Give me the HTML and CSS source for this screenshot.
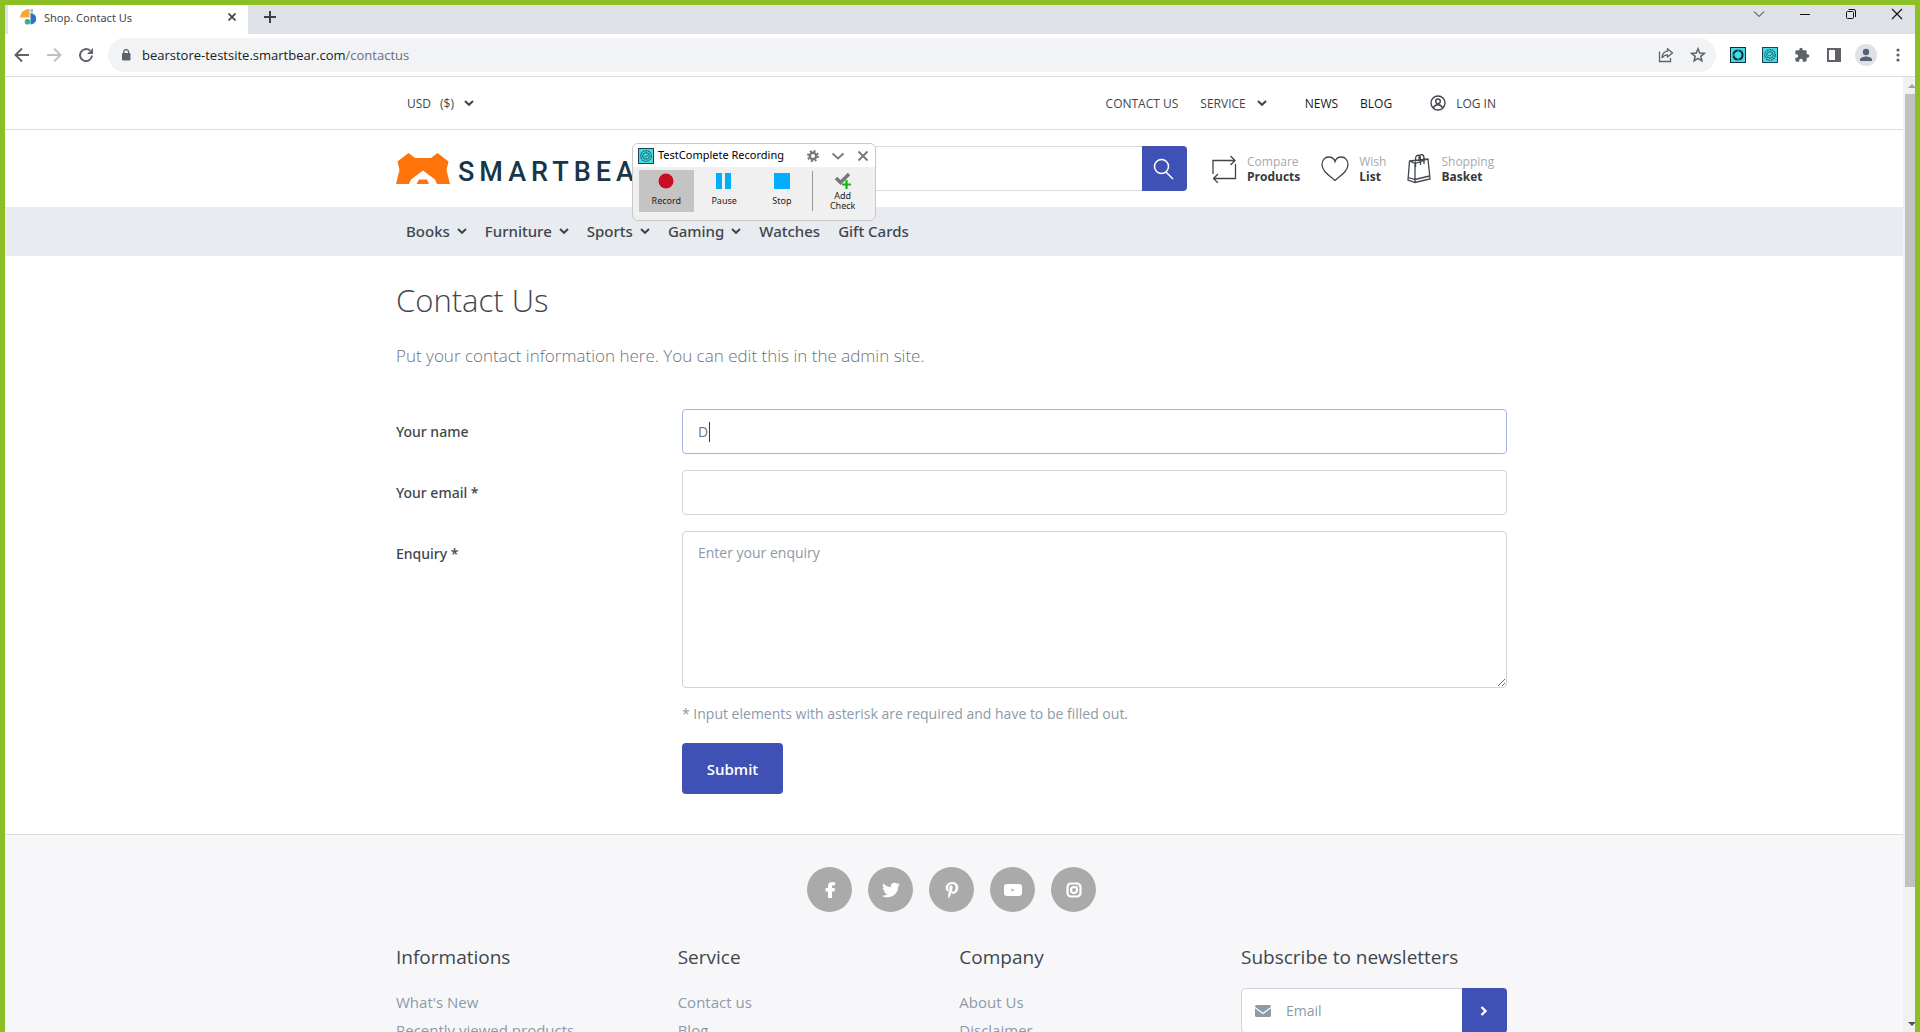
FILE: index.html
```html
<!DOCTYPE html>
<html lang="en">
<head>
<meta charset="utf-8">
<title>Shop. Contact Us</title>
<link rel="stylesheet" href="styles.css">
</head>
<body>
<svg class="defs" aria-hidden="true">
  <symbol id="chev" viewBox="0 0 10 8"><path d="M1 2 5 5.800 9 2" fill="none" stroke="currentColor" stroke-width="2"/></symbol>
  <symbol id="badge" viewBox="0 0 16 16"><rect x=".5" y=".5" width="15" height="15" fill="#43dbe3" stroke="#1b4450"/><circle cx="8" cy="8" r="5.300" fill="none" stroke="#1b6472" stroke-width="1.200" stroke-dasharray="2 .6"/><circle cx="8" cy="8" r="3.300" fill="none" stroke="#1b6472"/><path d="m6.500 8 1.200 1.200L9.800 7" fill="none" stroke="#1b6472"/></symbol>
</svg>
<div class="window">
  <header class="tabs">
    <div class="tab">
      <svg width="16" height="16" viewBox="0 0 16 16"><path d="M0 8.500A9 9 0 0 1 9.500 0V8.500Z" fill="#f7a833"/><path d="M10.500 0H13V3.500H10.500Z" fill="#7bcfc0"/><path d="M10.500 4A5.500 5.500 0 0 1 10.500 15.500Z" fill="#2f74c0"/><circle cx="7.500" cy="12.800" r="2.800" fill="#3db186"/></svg>
      <span class="tab-title">Shop. Contact Us</span>
      <button class="icon-btn" aria-label="Close tab"><svg width="8" height="8" viewBox="0 0 8 8"><path d="m.5.5 7 7m0-7-7 7" stroke="#3c4043" stroke-width="1.600"/></svg></button>
    </div>
    <button class="icon-btn new-tab" aria-label="New tab"><svg width="12" height="12" viewBox="0 0 12 12"><path d="M6 0v12M0 6h12" stroke="#3c4043" stroke-width="2"/></svg></button>
    <div class="win-controls">
      <button class="icon-btn" aria-label="Search tabs"><svg width="12" height="12" viewBox="0 0 12 12"><path d="m1 3.500 5 5 5-5" fill="none" stroke="#222"/></svg></button>
      <button class="icon-btn" aria-label="Minimize"><svg width="12" height="12" viewBox="0 0 12 12"><path d="M1 6.500h10" stroke="#111"/></svg></button>
      <button class="icon-btn" aria-label="Restore"><svg width="12" height="12" viewBox="0 0 12 12"><rect x="1.500" y="3.500" width="7" height="7" rx="1" fill="none" stroke="#111"/><path d="M3.500 1.500H9A1.500 1.500 0 0 1 10.500 3v6" fill="none" stroke="#111"/></svg></button>
      <button class="icon-btn" aria-label="Close"><svg width="12" height="12" viewBox="0 0 12 12"><path d="m1 1 10 10m0-10L1 11" stroke="#111" stroke-width="1.100"/></svg></button>
    </div>
  </header>
  <div class="toolbar">
    <button class="icon-btn" aria-label="Back"><svg width="16" height="16" viewBox="0 0 16 16"><path d="M15 8H2M8 1.500 1.500 8 8 14.500" fill="none" stroke="#5f6368" stroke-width="1.900"/></svg></button>
    <button class="icon-btn" aria-label="Forward"><svg width="16" height="16" viewBox="0 0 16 16"><path d="M1 8h13M8 1.500 14.500 8 8 14.500" fill="none" stroke="#bdc1c6" stroke-width="1.900"/></svg></button>
    <button class="icon-btn" aria-label="Reload"><svg width="16" height="16" viewBox="0 0 16 16"><path d="M14 8.500A6 6 0 1 1 12 3.600" fill="none" stroke="#5f6368" stroke-width="2"/><path d="M15 1v6H9Z" fill="#5f6368"/></svg></button>
    <div class="omnibox">
      <svg width="10" height="12" viewBox="0 0 10 12"><rect x="1" y="4" width="8.500" height="7.500" rx="1" fill="#5f6368"/><path d="M2.800 5V3a2.400 2.400 0 0 1 4.800 0v2" fill="none" stroke="#5f6368" stroke-width="1.300"/></svg>
      <span class="url">bearstore-testsite.smartbear.com<span class="path">/contactus</span></span>
      <button class="icon-btn" aria-label="Share"><svg width="16" height="16" viewBox="0 0 16 16"><path d="M1.500 4.500v10h11V11M9.500 1.800 14.500 6l-5 4V7.800C7 7.800 5.500 8.600 4 11 4.300 7 6.500 4.500 9.500 4.200Z" fill="none" stroke="#5f6368" stroke-width="1.300"/></svg></button>
      <button class="icon-btn" aria-label="Bookmark"><svg width="16" height="16" viewBox="0 0 16 16"><path d="m8 1.800 1.700 4.300 4.600.3-3.500 2.900 1.100 4.500L8 11.300l-3.900 2.500 1.100-4.500L1.700 6.400l4.600-.3Z" fill="none" stroke="#5f6368" stroke-width="1.500"/></svg></button>
    </div>
    <div class="extensions">
      <button class="icon-btn" aria-label="Recorder"><svg width="16" height="16" viewBox="0 0 16 16"><rect x=".5" y=".5" width="15" height="15" fill="#43dbe3" stroke="#12303c"/><circle cx="8" cy="8" r="4.500" fill="none" stroke="#12303c" stroke-width="2" stroke-dasharray="6.300 .77"/></svg></button>
      <button class="icon-btn" aria-label="TestComplete"><svg width="16" height="16"><use href="#badge"/></svg></button>
      <button class="icon-btn" aria-label="Extensions"><svg width="16" height="16" viewBox="0 0 24 24"><path d="M20.500 11H19V7a2 2 0 0 0-2-2h-4V3.500a2.500 2.500 0 0 0-5 0V5H4a2 2 0 0 0-2 2v3.800h1.500a2.700 2.700 0 0 1 0 5.400H2V20a2 2 0 0 0 2 2h3.800v-1.500a2.700 2.700 0 0 1 5.400 0V22H17a2 2 0 0 0 2-2v-4h1.500a2.500 2.500 0 0 0 0-5Z" fill="#5f6368"/></svg></button>
      <button class="icon-btn" aria-label="Side panel"><svg width="16" height="16" viewBox="0 0 16 16"><path d="M1 1h14v14H1ZM3 3v10h6V3Z" fill="#5f6368" fill-rule="evenodd"/></svg></button>
      <button class="icon-btn avatar" aria-label="Profile"><svg width="22" height="22" viewBox="0 0 22 22"><circle cx="11" cy="11" r="11" fill="#dee1e6"/><circle cx="11" cy="8" r="3.200" fill="#56637a"/><path d="M5 17v-1.500c0-2 4-3 6-3s6 1 6 3V17Z" fill="#56637a"/></svg></button>
      <button class="icon-btn" aria-label="Menu"><svg width="16" height="16" viewBox="0 0 16 16" fill="#5f6368"><circle cx="8" cy="3" r="1.600"/><circle cx="8" cy="8" r="1.600"/><circle cx="8" cy="13" r="1.600"/></svg></button>
    </div>
  </div>
  <div class="viewport">
    <div class="page">
      <div class="topbar"><div class="container">
        <button class="link-btn currency"><span>USD</span><span>($)</span><svg class="chev"><use href="#chev"/></svg></button>
        <nav class="top-links">
          <a href="#">CONTACT US</a>
          <a href="#">SERVICE<svg class="chev wide"><use href="#chev"/></svg></a>
          <a href="#" class="strong after">NEWS</a>
          <a href="#" class="strong">BLOG</a>
          <a href="#" class="login"><svg width="16" height="16" viewBox="0 0 16 16" fill="none" stroke="#3f464d" stroke-width="1.400"><circle cx="8" cy="8" r="7"/><circle cx="8" cy="6.300" r="2.300"/><path d="M3.500 12.800c1-2.400 2.500-3 4.500-3s3.500.6 4.500 3"/></svg>LOG IN</a>
        </nav>
      </div></div>
      <div class="shopbar"><div class="container">
        <a href="#" class="logo"><svg width="54" height="31" viewBox="0 0 54 31"><path d="M0 31 3.500 17 1.500 8.500 12.500 0 19 5H35L41.500 0 52.500 8.500 50.500 17 54 31H41L39 26.500 27 17.500 15 26.500 13 31ZM20.500 31 23 26.500h8L33 31Z" fill="#ff730b"/></svg><span>SMARTBEAR</span></a>
        <form class="search"><input type="search" aria-label="Search"><button type="button" aria-label="Search"><svg width="22" height="22" viewBox="0 0 22 22" fill="none" stroke="#fff" stroke-width="1.500"><circle cx="8.500" cy="8.500" r="7"/><path d="m13 14 7 7"/></svg></button></form>
        <nav class="tools">
          <a href="#"><svg width="26" height="28" viewBox="0 0 26 28" fill="none" stroke="#3f464d" stroke-width="1.300"><path d="M2 19V5.500H24M19.500 1 24 5.500 19.500 10M24.500 9v14.500H2.500M7 19 2.500 23.500 7 28"/></svg><span>Compare<b>Products</b></span></a>
          <a href="#"><svg width="28" height="26" viewBox="0 0 28 26" fill="none" stroke="#3f464d" stroke-width="1.300"><path d="M14 24.500C9 20 1 15.500 1 8.500 1 4 4 1 7.500 1 10.500 1 13 2.500 14 5.500 15 2.500 17.500 1 20.500 1 24 1 27 4 27 8.500 27 15.500 19 20 14 24.500Z"/></svg><span>Wish<b>List</b></span></a>
          <a href="#"><svg width="24" height="30" viewBox="0 0 24 30" fill="none" stroke="#3f464d" stroke-width="1.300"><path d="M2.500 7 21 5 23 25 8 28.500 1 26ZM2.500 7 8 9.500v19M8 9.500 21 5M1.300 23.500l6.700 2 14.500-3.500M8.500 13V5c0-5 5-5 5 0v6M12 6.500V4c0-4.500 5-4.500 5 0v6"/></svg><span>Shopping<b>Basket</b></span></a>
        </nav>
      </div></div>
      <nav class="menu"><div class="container">
        <a href="#">Books<svg class="chev"><use href="#chev"/></svg></a>
        <a href="#">Furniture<svg class="chev"><use href="#chev"/></svg></a>
        <a href="#">Sports<svg class="chev"><use href="#chev"/></svg></a>
        <a href="#">Gaming<svg class="chev"><use href="#chev"/></svg></a>
        <a href="#">Watches</a>
        <a href="#">Gift Cards</a>
      </div></nav>
      <main class="container">
        <h1>Contact Us</h1>
        <p class="intro">Put your contact information here. You can edit this in the admin site.</p>
        <form class="contact">
          <label for="name">Your name</label>
          <div class="field"><input id="name" class="focused" type="text" value="D"><i class="caret"></i></div>
          <label for="email">Your email *</label>
          <div class="field"><input id="email" type="email"></div>
          <label for="enquiry">Enquiry *</label>
          <div class="field"><textarea id="enquiry" placeholder="Enter your enquiry"></textarea></div>
          <div class="actions"><p>* Input elements with asterisk are required and have to be filled out.</p><button type="button">Submit</button></div>
        </form>
      </main>
      <footer><div class="container">
        <div class="social">
          <a href="#" aria-label="Facebook"><svg width="18" height="18" viewBox="0 0 18 18"><path d="M7 17V10.500H4.500V7H7V5c0-2.700 1.500-4 4-4l3 .2v3H12.500C11.500 4.200 11 4.500 11 5.500V7h3L13.500 10.500H11V17Z" fill="#fff"/></svg></a>
          <a href="#" aria-label="Twitter"><svg width="18" height="18" viewBox="0 0 512 512"><path d="M459.400 151.700c.3 4.500.3 9.100.3 13.600 0 138.700-105.600 298.600-298.600 298.600-59.500 0-114.700-17.200-161.100-47.100 8.400 1 16.600 1.300 25.300 1.300 49.100 0 94.200-16.600 130.300-44.800-46.100-1-84.800-31.200-98.100-72.800 6.500 1 13 1.600 19.800 1.600 9.400 0 18.800-1.300 27.600-3.600-48.100-9.700-84.100-52-84.100-103v-1.300c14 7.800 30.200 12.700 47.400 13.300-28.300-18.800-46.800-51-46.800-87.400 0-19.500 5.200-37.400 14.300-53 51.700 63.700 129.300 105.300 216.400 109.800-1.600-7.800-2.600-15.900-2.600-24 0-57.800 46.800-104.900 104.900-104.900 30.200 0 57.500 12.700 76.700 33.100 23.700-4.500 46.500-13.300 66.600-25.300-7.800 24.400-24.400 44.800-46.100 57.800 21.100-2.300 41.600-8.100 60.400-16.200-14.300 20.800-32.200 39.300-52.600 54.300Z" fill="#fff"/></svg></a>
          <a href="#" aria-label="Pinterest"><svg width="16" height="16" viewBox="0 0 384 512"><path d="M204 6.500C101.400 6.500 0 74.900 0 185.600 0 256 39.600 296 63.600 296c9.900 0 15.600-27.600 15.600-35.400 0-9.300-23.700-29.100-23.700-67.800 0-80.400 61.200-137.400 140.400-137.400 68.100 0 118.500 38.700 118.500 109.800 0 53.100-21.300 152.700-90.300 152.700-24.900 0-46.200-18-46.200-43.800 0-37.800 26.400-74.400 26.400-113.400 0-66.200-93.900-54.200-93.900 25.800 0 16.800 2.100 35.400 9.600 50.700-13.800 59.400-42 147.900-42 209.100 0 18.900 2.700 37.500 4.500 56.400 3.400 3.800 1.700 3.400 6.900 1.500 50.400-69 48.600-82.500 71.400-172.800 12.300 23.400 44.100 36 69.300 36 106.200 0 153.900-103.500 153.900-196.800C384 71.300 298.200 6.500 204 6.500Z" fill="#fff" stroke="#fff" stroke-width="20"/></svg></a>
          <a href="#" aria-label="YouTube"><svg width="18" height="18" viewBox="0 0 18 18"><path d="M3 3h12a3 3 0 0 1 3 3v6a3 3 0 0 1-3 3H3a3 3 0 0 1-3-3V6a3 3 0 0 1 3-3Zm4.500 4.500v3l3-1.500Z" fill="#fff" fill-rule="evenodd"/></svg></a>
          <a href="#" aria-label="Instagram"><svg width="18" height="18" viewBox="0 0 18 18" fill="none" stroke="#fff" stroke-width="2.200"><rect x="2.500" y="2.500" width="13" height="13" rx="3.500"/><circle cx="9" cy="9" r="3"/><circle cx="12.700" cy="5.300" r=".4" stroke-width="1"/></svg></a>
        </div>
        <div class="columns">
          <section><h2>Informations</h2><a href="#">What's New</a><a href="#">Recently viewed products</a></section>
          <section><h2>Service</h2><a href="#">Contact us</a><a href="#">Blog</a></section>
          <section><h2>Company</h2><a href="#">About Us</a><a href="#">Disclaimer</a></section>
          <section class="news"><h2>Subscribe to newsletters</h2>
            <form class="subscribe"><svg width="16" height="12" viewBox="0 0 16 12"><rect width="16" height="12" rx="1.500" fill="#8c9aa9"/><path d="M0 2.500 8 8.500l8-6" fill="none" stroke="#fff" stroke-width="1.200"/></svg><input type="email" placeholder="Email" aria-label="Email"><button type="button" aria-label="Subscribe"><svg width="8" height="10" viewBox="0 0 8 10"><path d="m1.500 1 4 4-4 4" fill="none" stroke="#fff" stroke-width="2.400"/></svg></button></form>
          </section>
        </div>
      </div></footer>
    </div>
    <div class="scrollbar"><svg width="8" height="17" viewBox="0 0 8 17"><path d="m1 11 4-4 3 3v1Z" fill="#a3a3a3"/></svg><span class="thumb"></span><svg width="8" height="17" viewBox="0 0 8 17"><path d="m1 7 4 4 3-3V7Z" fill="#505050"/></svg></div>
  </div>
</div>
<aside class="recorder" aria-label="TestComplete Recording">
  <div class="rec-title"><svg width="16" height="16"><use href="#badge"/></svg><span>TestComplete Recording</span>
    <button class="icon-btn" aria-label="Settings"><svg width="12" height="12" viewBox="0 0 12 12"><circle cx="6" cy="6" r="3.200" fill="none" stroke="#777" stroke-width="2.400"/><circle cx="6" cy="6" r="5" fill="none" stroke="#777" stroke-width="2" stroke-dasharray="2 1.930"/></svg></button>
    <button class="icon-btn" aria-label="Collapse"><svg width="12" height="12" viewBox="0 0 12 12"><path d="m.5 3.500 5.500 5 5.500-5" fill="none" stroke="#777" stroke-width="1.800"/></svg></button>
    <button class="icon-btn" aria-label="Close recorder"><svg width="12" height="12" viewBox="0 0 12 12"><path d="m1.500 1.500 9 9m0-9-9 9" stroke="#777" stroke-width="1.800"/></svg></button>
  </div>
  <div class="rec-body">
    <button class="on"><svg width="16" height="16"><circle cx="8" cy="8" r="7.500" fill="#c80d22"/></svg>Record</button>
    <button><svg width="16" height="16" fill="#00aeff"><path d="M0 0h6v16H0zM9 0h6v16H9z"/></svg>Pause</button>
    <button><svg width="16" height="16"><path d="M0 0h16v16H0z" fill="#00aeff"/></svg>Stop</button>
    <hr>
    <button class="check"><svg width="16" height="16" viewBox="0 0 16 16"><path d="m1 5 4.500 4.500L14 1" fill="none" stroke="#777" stroke-width="3.500"/><path d="M11.500 7v9M7 11.500h9" stroke="#12b812" stroke-width="2.200"/></svg>Add<br>Check</button>
  </div>
</aside>
</body>
</html>
```
FILE: styles.css
```css
* { box-sizing: border-box; }
body { margin: 0; font-family: "Open Sans", "Noto Sans", sans-serif; font-size: 14px; color: #3f464d; background: #fff; }
a { color: inherit; text-decoration: none; }
button, input, textarea { font: inherit; color: inherit; margin: 0; }
svg { display: block; flex: none; }
.defs { position: absolute; width: 0; height: 0; }
.icon-btn, .link-btn { display: flex; align-items: center; justify-content: center; border: 0; padding: 0; background: none; }

/* Browser window */
.window { display: flex; flex-direction: column; height: 100vh; overflow: hidden; border: 5px solid #8cbf26; border-bottom: 0; }
.tabs { flex: none; display: flex; height: 29px; background: #dee1e6; }
.tab { display: flex; align-items: center; gap: 8px; width: 240px; height: 29px; margin-left: 3px; padding: 0 12px 5px; background: #fff; }
.tab-title { flex: 1; font-family: "Noto Sans", sans-serif; font-size: 11px; }
.new-tab { width: 44px; height: 24px; }
.win-controls { display: flex; margin: 0 -5px 0 auto; height: 18px; }
.win-controls .icon-btn { width: 46px; }
.toolbar { flex: none; display: flex; align-items: center; height: 43px; padding: 0 9px; background: #fff; border-bottom: 1px solid #dadce0; }
.toolbar > .icon-btn { width: 16px; margin-right: 16px; }
.omnibox { flex: 1; display: flex; align-items: center; height: 34px; margin: 0 14px 0 -2px; padding: 0 10px 0 13px; border-radius: 17px; background: #f1f3f4; color: #202124; }
.url { flex: 1; padding-left: 11px; font-size: 13px; }
.path { color: #6b7075; }
.omnibox .icon-btn { width: 16px; margin-left: 16px; }
.extensions { display: flex; align-items: center; }
.extensions .icon-btn { width: 16px; margin-right: 16px; }
.extensions .avatar { width: 22px; margin: 0 13px 0 -3px; }
.extensions .icon-btn:last-child { margin-right: 0; }
.viewport { flex: 1; display: flex; min-height: 0; }
.page { flex: 1; overflow: hidden; }
.scrollbar { display: flex; flex-direction: column; align-items: flex-end; width: 12px; background: #f1f1f1; }
.thumb { width: 10px; height: 83%; margin-bottom: auto; background: #c1c1c1; }

/* Shop header */
.container { width: 100%; max-width: 1116px; margin: 0 auto; padding-right: 5px; }
.chev { width: 10px; height: 8px; margin-left: 7px; }
.topbar { border-bottom: 1px solid #dddddd; }
.topbar .container { display: flex; align-items: center; justify-content: space-between; height: 52px; padding-left: 11px; padding-right: 16px; font-size: 12px; }
.currency { gap: 9px; }
.currency .chev { margin-left: 1px; }
.top-links, .top-links a { display: flex; align-items: center; }
.top-links a { margin-left: 22px; }
.top-links .wide { margin-left: 11px; }
.top-links .after { margin-left: 38px; }
.top-links .login { gap: 10px; margin-left: 38px; }
.strong { color: #16191c; font-weight: 500; }
.shopbar .container { display: flex; align-items: center; height: 77px; }
.logo { display: flex; align-items: center; gap: 8px; width: 254px; color: #173647; font-family: Roboto, sans-serif; font-size: 27px; font-weight: 500; letter-spacing: 5px; line-height: 31px; }
.logo span { padding-top: 8px; }
.search { flex: 1; display: flex; height: 45px; }
.search input { flex: 1; min-width: 0; border: 1px solid #dddddd; border-right: 0; border-radius: 4px 0 0 4px; background: #fff; }
.search button { display: flex; align-items: center; justify-content: center; width: 45px; padding: 0 2px 0 0; border: 0; border-radius: 0 4px 4px 0; background: #3f51b5; }
.tools { display: flex; gap: 21px; width: 320px; padding-left: 24px; }
.tools a { display: flex; align-items: center; gap: 10px; color: #a6a9ad; font-size: 12px; line-height: 15px; }
.tools b { display: block; color: #343a40; font-weight: 700; }
.menu { background: #e8ebef; }
.menu .container { display: flex; align-items: center; gap: 18px; height: 49px; padding-left: 10px; padding-bottom: 1px; font-family: "Noto Sans", sans-serif; font-size: 15px; font-weight: 500; }
.menu a { display: flex; align-items: center; }

/* Contact form */
h1 { margin: 0; padding-top: 24px; font-size: 31px; font-weight: 300; line-height: 40px; }
.intro { margin: 24px 0 41px; color: #6c7278; font-size: 17px; font-weight: 300; line-height: 24px; }
.contact { display: grid; grid-template-columns: 286px 1fr; row-gap: 16px; }
.contact label { padding-top: 13px; font-family: "Noto Sans", sans-serif; font-weight: 500; line-height: 20px; }
.field { position: relative; }
.field input, .field textarea { display: block; width: 100%; height: 45px; padding: 11px 15px; border: 1px solid #ced4da; border-radius: 4px; background: #fff; outline: 0; line-height: 20px; }
.field textarea { height: 157px; }
.field .focused { border-color: #a9b3e3; color: #6c757d; }
.caret { position: absolute; left: 27px; top: 13px; width: 1px; height: 20px; background: #343a40; }
::placeholder { color: #8c9aa9; opacity: 1; }
.actions { grid-column: 2; }
.actions p { margin: 0 0 19px; color: #8c9aa9; line-height: 20px; }
.actions button { width: 101px; height: 51px; border: 0; border-radius: 4px; background: #3f51b5; color: #fff; font-size: 15px; font-weight: 600; }

/* Footer */
footer { margin-top: 40px; padding-top: 32px; border-top: 1px solid #dddddd; background: #f7f7f9; }
.social { display: flex; justify-content: center; gap: 16px; }
.social a { display: flex; align-items: center; justify-content: center; width: 45px; height: 45px; border-radius: 50%; background: #aaaaaa; }
.columns { display: grid; grid-template-columns: repeat(3, 1fr) 266px; padding-top: 33px; }
h2 { margin: 0 0 19px; font-size: 19px; font-weight: 400; line-height: 24px; }
.columns section > a { display: block; color: #8c9aa9; font-size: 15px; line-height: 28px; }
.subscribe { display: flex; align-items: center; height: 45px; padding-left: 13px; border: 1px solid #ced4da; border-radius: 4px; background: #fff; }
.subscribe input { flex: 1; min-width: 0; height: 40px; margin-left: 11px; padding: 0 4px; border: 0; background: none; }
.subscribe button { display: flex; align-items: center; justify-content: center; align-self: stretch; width: 45px; margin: -1px; padding: 0; border: 0; border-radius: 0 4px 4px 0; background: #3f51b5; }

/* Floating recorder window */
.recorder { position: absolute; left: 632px; top: 143px; width: 244px; border: 1px solid #c8c8c8; border-radius: 6px; overflow: hidden; background: #f0f0f0; color: #000; font-family: "Noto Sans", sans-serif; }
.rec-title { display: flex; align-items: center; height: 23px; padding: 0 6px 0 5px; background: #fff; }
.rec-title span { flex: 1; padding: 0 0 2px 4px; font-size: 11px; line-height: 20px; }
.rec-title .icon-btn { width: 12px; margin-left: 13px; }
.rec-body { display: flex; height: 53px; padding: 3px 6px; gap: 3px; }
.rec-body button { display: flex; flex-direction: column; align-items: center; width: 56px; height: 42px; padding: 3px 0 0; border: 0; background: none; font-size: 9px; line-height: 12px; gap: 6px; color: #222; }
.rec-body .on { background: #c4c4c4; }
.rec-body .check { width: 54px; gap: 2px; line-height: 10px; }
.rec-body hr { width: 1px; height: 40px; margin: 1px 0; border: 0; background: #999; }
```
